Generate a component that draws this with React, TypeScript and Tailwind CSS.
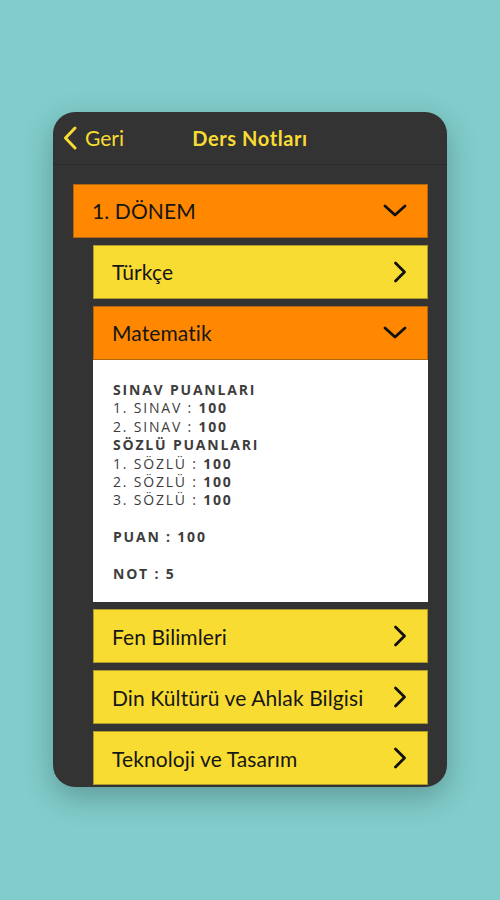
import React from "react";

const ChevronDown = () => (
  <svg width="24" height="14" viewBox="0 0 24 14" fill="none">
    <path d="M2 2 L12 11 L22 2" stroke="#111" strokeWidth="2.8" strokeLinecap="round" strokeLinejoin="round" />
  </svg>
);

const ChevronRight = () => (
  <svg width="14" height="22" viewBox="0 0 14 22" fill="none">
    <path d="M2.5 2 L11.5 11 L2.5 20" stroke="#111" strokeWidth="2.8" strokeLinecap="round" strokeLinejoin="round" />
  </svg>
);

const Row = ({ label, open, orange }: { label: string; open?: boolean; orange?: boolean }) => (
  <div
    className={`flex items-center justify-between h-[54px] pl-[18px] pr-[20px] border border-[#3a3520]/40 ${
      orange ? "bg-[#ff8800]" : "bg-[#f9dc31]"
    }`}
  >
    <span className="text-[21px] text-[#161616] tracking-[0.1px]">{label}</span>
    {open ? <ChevronDown /> : <ChevronRight />}
  </div>
);

export default function App() {
  return (
    <div
      className="w-[500px] h-[900px] bg-[#80cdcb] pt-[112px] flex justify-center"
      style={{ fontFamily: "Lato, 'Noto Sans', sans-serif" }}
    >
      <div className="w-[394px] h-[675px] bg-[#333333] rounded-[22px] overflow-hidden shadow-[0_10px_30px_rgba(0,0,0,0.25)] flex flex-col">
        <div className="relative h-[53px] flex items-center justify-center border-b border-[#2a2a2a] shrink-0">
          <div className="absolute left-[10px] top-0 h-full flex items-center gap-[8px] text-[#f9dc31]">
            <svg width="14" height="24" viewBox="0 0 14 24" fill="none">
              <path d="M12 2 L2.5 12 L12 22" stroke="#f9dc31" strokeWidth="3" strokeLinecap="round" strokeLinejoin="round" />
            </svg>
            <span className="text-[21px]">Geri</span>
          </div>
          <span className="text-[20px] font-bold text-[#f9dc31] tracking-[0.6px]">Ders Notları</span>
        </div>
        <div className="pt-[19px] pl-[20px] pr-[19px] flex flex-col">
          <Row label="1. DÖNEM" open orange />
          <div className="pl-[20px] flex flex-col gap-[7px] pt-[7px]">
            <Row label="Türkçe" />
            <div className="flex flex-col">
              <Row label="Matematik" open orange />
              <div
                className="bg-white pt-[21px] pb-[19px] pl-[20px] text-[14px] leading-[18.4px] tracking-[1.8px] text-[#3d3d3d] font-medium"
                style={{ fontFamily: "'Open Sans', Lato, sans-serif" }}
              >
                <div className="font-bold">SINAV PUANLARI</div>
                <div>1. SINAV : <b>100</b></div>
                <div>2. SINAV : <b>100</b></div>
                <div className="font-bold">SÖZLÜ PUANLARI</div>
                <div>1. SÖZLÜ : <b>100</b></div>
                <div>2. SÖZLÜ : <b>100</b></div>
                <div>3. SÖZLÜ : <b>100</b></div>
                <div>&nbsp;</div>
                <div className="font-bold">PUAN : 100</div>
                <div>&nbsp;</div>
                <div className="font-bold">NOT : 5</div>
              </div>
            </div>
            <Row label="Fen Bilimleri" />
            <Row label="Din Kültürü ve Ahlak Bilgisi" />
            <Row label="Teknoloji ve Tasarım" />
          </div>
        </div>
      </div>
    </div>
  );
}
